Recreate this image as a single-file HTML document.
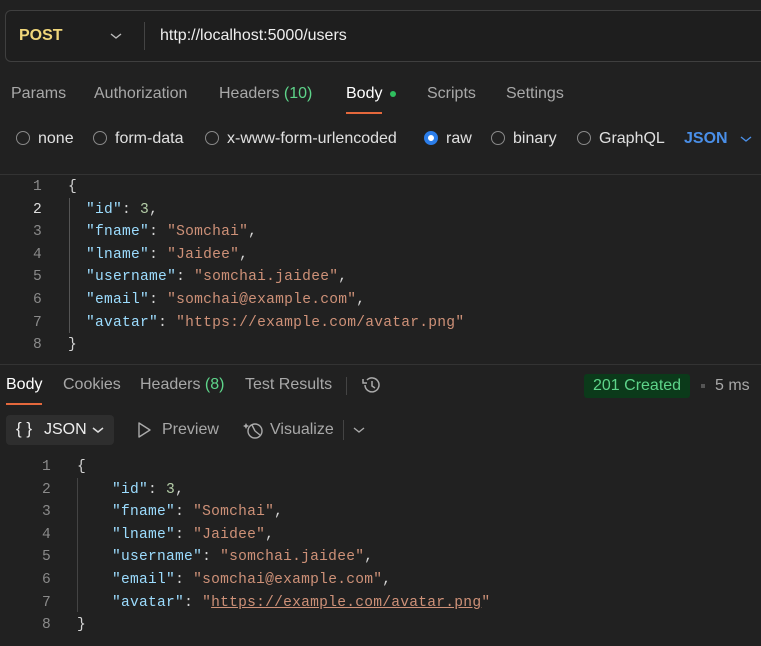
<!DOCTYPE html>
<html><head><meta charset="utf-8"><style>
body{margin:0;width:761px;height:646px;background:#212121;font-family:"Liberation Sans",sans-serif;color:#e0e0e0;position:relative;overflow:hidden;font-size:16px}
.a{position:absolute;white-space:nowrap}
.mono{font-family:"Liberation Mono",monospace;font-size:14.6px;letter-spacing:0.25px}
.k{color:#9cdcfe}.s{color:#ce9178}.n{color:#b5cea8}.p{color:#d4d4d4}
.ln{color:#8a8a8a;width:20px;text-align:right}
.rad{display:inline-block;width:12px;height:12px;border:1.3px solid #8a8a8a;border-radius:50%;vertical-align:-2px;margin-right:8px}
.dim{color:#a8a8a8}
</style></head><body>
<div class="a" style="left:5px;top:10px;width:770px;height:50px;border:1px solid #3f3f3f;border-radius:6px;background:#1e1e1e"></div>
<div class="a" style="left:19px;top:27px;color:#f0d67a;font-weight:bold;font-size:16px">POST</div>
<svg class="a" style="left:109px;top:31px" width="14" height="10"><path d="M2 3l5 4 5-4" stroke="#bbb" stroke-width="1.4" fill="none"/></svg>
<div class="a" style="left:144px;top:22px;width:1px;height:28px;background:#444"></div>
<div class="a" style="left:160px;top:27px;color:#eee">http://localhost:5000/users</div>

<div class="a dim" style="left:11px;top:85px">Params</div>
<div class="a dim" style="left:94px;top:85px">Authorization</div>
<div class="a dim" style="left:219px;top:85px">Headers <span style="color:#5ed48a">(10)</span></div>
<div class="a" style="left:346px;top:85px;color:#fff">Body</div>
<div class="a" style="left:390px;top:91px;width:6px;height:6px;border-radius:50%;background:#2fbf5e"></div>
<div class="a" style="left:346px;top:112px;width:36px;height:2px;background:#e4683c"></div>
<div class="a dim" style="left:427px;top:85px">Scripts</div>
<div class="a dim" style="left:506px;top:85px">Settings</div>

<div class="a" style="left:16px;top:130px"><span class="rad"></span>none</div>
<div class="a" style="left:93px;top:130px"><span class="rad"></span>form-data</div>
<div class="a" style="left:205px;top:130px"><span class="rad"></span>x-www-form-urlencoded</div>
<div class="a" style="left:424px;top:130px"><span class="rad" style="border:4px solid #2b7de9;width:6px;height:6px;background:#fff"></span>raw</div>
<div class="a" style="left:491px;top:130px"><span class="rad"></span>binary</div>
<div class="a" style="left:577px;top:130px"><span class="rad"></span>GraphQL</div>
<div class="a" style="left:684px;top:130px;color:#4a8fe8;font-weight:bold">JSON</div>
<svg class="a" style="left:739px;top:134px" width="14" height="10"><path d="M2 3l5 4 5-4" stroke="#4a8fe8" stroke-width="1.4" fill="none"/></svg>
<div class="a" style="left:0;top:174px;width:761px;height:1px;background:#333"></div>

<div class="a" style="left:69px;top:198px;width:1px;height:135px;background:#555"></div>
<div class="a mono" style="left:0;top:176px;line-height:22.6px">
<div><span class="a ln" style="left:22px">1</span><span style="margin-left:68px" class="p">{</span></div>
<div><span class="a ln" style="left:22px;color:#ddd">2</span><span style="margin-left:86px"><span class="k">"id"</span><span class="p">: </span><span class="n">3</span><span class="p">,</span></span></div>
<div><span class="a ln" style="left:22px">3</span><span style="margin-left:86px"><span class="k">"fname"</span><span class="p">: </span><span class="s">"Somchai"</span><span class="p">,</span></span></div>
<div><span class="a ln" style="left:22px">4</span><span style="margin-left:86px"><span class="k">"lname"</span><span class="p">: </span><span class="s">"Jaidee"</span><span class="p">,</span></span></div>
<div><span class="a ln" style="left:22px">5</span><span style="margin-left:86px"><span class="k">"username"</span><span class="p">: </span><span class="s">"somchai.jaidee"</span><span class="p">,</span></span></div>
<div><span class="a ln" style="left:22px">6</span><span style="margin-left:86px"><span class="k">"email"</span><span class="p">: </span><span class="s">"somchai@example.com"</span><span class="p">,</span></span></div>
<div><span class="a ln" style="left:22px">7</span><span style="margin-left:86px"><span class="k">"avatar"</span><span class="p">: </span><span class="s">"https://example.com/avatar.png"</span></span></div>
<div><span class="a ln" style="left:22px">8</span><span style="margin-left:68px" class="p">}</span></div>
</div>
<div class="a" style="left:0;top:364px;width:761px;height:1px;background:#333"></div>

<div class="a" style="left:6px;top:376px;color:#fff">Body</div>
<div class="a" style="left:6px;top:403px;width:36px;height:2px;background:#e4683c"></div>
<div class="a dim" style="left:63px;top:376px">Cookies</div>
<div class="a dim" style="left:140px;top:376px">Headers <span style="color:#5ed48a">(8)</span></div>
<div class="a dim" style="left:245px;top:376px">Test Results</div>
<div class="a" style="left:346px;top:377px;width:1px;height:18px;background:#444"></div>
<svg class="a" style="left:361px;top:375px" width="22" height="20" viewBox="0 0 22 20"><path d="M4 10a7 7 0 1 0 2-5" stroke="#aaa" stroke-width="1.5" fill="none"/><path d="M2 4v4h4" stroke="#aaa" stroke-width="1.5" fill="none"/><path d="M11 6v5l3 2" stroke="#aaa" stroke-width="1.5" fill="none"/></svg>
<div class="a" style="left:584px;top:374px;width:106px;height:24px;background:#0b3a1a;border-radius:3px"></div>
<div class="a" style="left:593px;top:377px;color:#5ed48a">201 Created</div>
<div class="a" style="left:701px;top:384px;width:4px;height:4px;background:#555"></div>
<div class="a dim" style="left:715px;top:377px">5 ms</div>

<div class="a" style="left:6px;top:415px;width:108px;height:30px;background:#2e2e2e;border-radius:4px"></div>
<div class="a" style="left:16px;top:419px;color:#eee;font-size:17px">{ }</div>
<div class="a" style="left:44px;top:421px;color:#eee">JSON</div>
<svg class="a" style="left:91px;top:425px" width="14" height="10"><path d="M2 3l5 4 5-4" stroke="#ddd" stroke-width="1.5" fill="none"/></svg>
<svg class="a" style="left:136px;top:421px" width="16" height="18"><path d="M3 2l11 7-11 7z" stroke="#aaa" stroke-width="1.4" fill="none" stroke-linejoin="round"/></svg>
<div class="a dim" style="left:162px;top:421px">Preview</div>
<svg class="a" style="left:243px;top:420px" width="22" height="20"><circle cx="12" cy="11" r="7" stroke="#aaa" stroke-width="1.4" fill="none"/><path d="M12 11l-3 -6M12 11l5 4" stroke="#aaa" stroke-width="1.4"/><path d="M3 3l1 2 2 1-2 1-1 2-1-2-2-1 2-1z" fill="#aaa"/></svg>
<div class="a dim" style="left:270px;top:421px">Visualize</div>
<div class="a" style="left:343px;top:420px;width:1px;height:20px;background:#444"></div>
<svg class="a" style="left:352px;top:425px" width="14" height="10"><path d="M2 3l5 4 5-4" stroke="#aaa" stroke-width="1.4" fill="none"/></svg>

<div class="a" style="left:77px;top:478px;width:1px;height:134px;background:#444"></div>
<div class="a mono" style="left:0;top:456px;line-height:22.6px">
<div><span class="a ln" style="left:31px">1</span><span style="margin-left:77px" class="p">{</span></div>
<div><span class="a ln" style="left:31px">2</span><span style="margin-left:112px"><span class="k">"id"</span><span class="p">: </span><span class="n">3</span><span class="p">,</span></span></div>
<div><span class="a ln" style="left:31px">3</span><span style="margin-left:112px"><span class="k">"fname"</span><span class="p">: </span><span class="s">"Somchai"</span><span class="p">,</span></span></div>
<div><span class="a ln" style="left:31px">4</span><span style="margin-left:112px"><span class="k">"lname"</span><span class="p">: </span><span class="s">"Jaidee"</span><span class="p">,</span></span></div>
<div><span class="a ln" style="left:31px">5</span><span style="margin-left:112px"><span class="k">"username"</span><span class="p">: </span><span class="s">"somchai.jaidee"</span><span class="p">,</span></span></div>
<div><span class="a ln" style="left:31px">6</span><span style="margin-left:112px"><span class="k">"email"</span><span class="p">: </span><span class="s">"somchai@example.com"</span><span class="p">,</span></span></div>
<div><span class="a ln" style="left:31px">7</span><span style="margin-left:112px"><span class="k">"avatar"</span><span class="p">: </span><span class="s">"<u>https://example.com/avatar.png</u>"</span></span></div>
<div><span class="a ln" style="left:31px">8</span><span style="margin-left:77px" class="p">}</span></div>
</div>
</body></html>
